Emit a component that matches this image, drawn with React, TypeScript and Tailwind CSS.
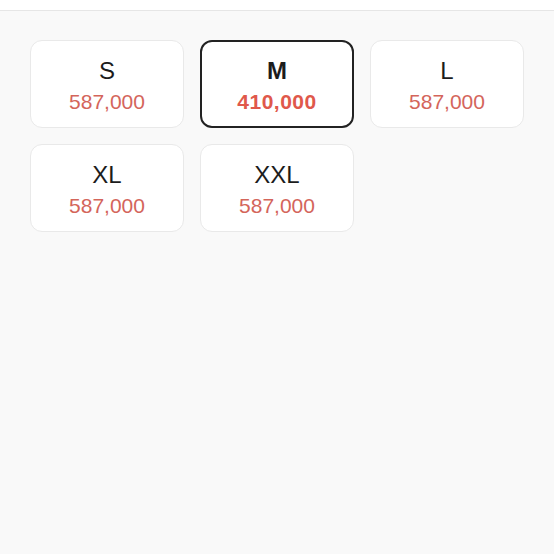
import React from "react";

const sizes = [
  { label: "S", price: "587,000", selected: false },
  { label: "M", price: "410,000", selected: true },
  { label: "L", price: "587,000", selected: false },
  { label: "XL", price: "587,000", selected: false },
  { label: "XXL", price: "587,000", selected: false },
];

export default function App() {
  return (
    <div
      className="w-[554px] h-[554px] bg-[#f9f9f9] flex flex-col"
      style={{ fontFamily: '"Liberation Sans", Arial, sans-serif' }}
    >
      <div className="h-[10px] bg-white border-b border-[#e6e6e6] box-content" />
      <div className="grid grid-cols-3 gap-4 px-[30px] pt-[29px]">
        {sizes.map((s) => (
          <div
            key={s.label}
            className={
              s.selected
                ? "h-[88px] pt-[4px] rounded-[12px] bg-white border-2 border-[#222222] flex flex-col items-center justify-center"
                : "h-[88px] pt-[4px] rounded-[12px] bg-white border border-[#e9e9e9] flex flex-col items-center justify-center"
            }
          >
            <div
              className={
                s.selected
                  ? "text-[24px] leading-[26px] font-bold text-[#1c1c1c]"
                  : "text-[24px] leading-[26px] text-[#1c1c1c]"
              }
            >
              {s.label}
            </div>
            <div
              className={
                s.selected
                  ? "mt-[5px] text-[21px] leading-[26px] font-bold tracking-[0.5px] text-[#e0584b]"
                  : "mt-[5px] text-[21px] leading-[26px] text-[#d4655b]"
              }
            >
              {s.price}
            </div>
          </div>
        ))}
      </div>
    </div>
  );
}
